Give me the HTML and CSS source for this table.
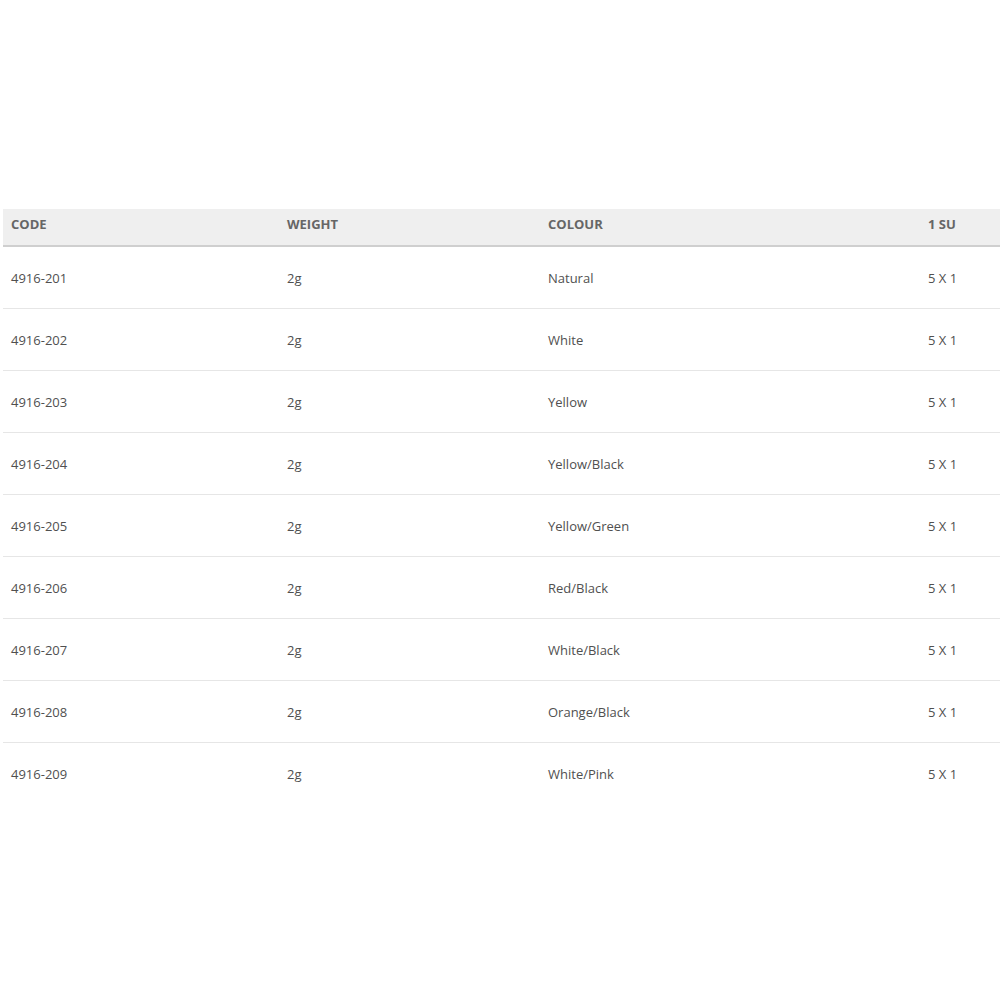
FILE: index.html
```html
<!DOCTYPE html>
<html>
<head>
<meta charset="utf-8">
<link rel="stylesheet" href="styles.css">
</head>
<body>
<div class="wrap">
<table class="spec">
<colgroup><col class="c1"><col class="c2"><col class="c3"><col class="c4"></colgroup>
<thead>
<tr><th>CODE</th><th>WEIGHT</th><th>COLOUR</th><th>1 SU</th></tr>
</thead>
<tbody>
<tr><td>4916-201</td><td>2g</td><td>Natural</td><td>5 X 1</td></tr>
<tr><td>4916-202</td><td>2g</td><td>White</td><td>5 X 1</td></tr>
<tr><td>4916-203</td><td>2g</td><td>Yellow</td><td>5 X 1</td></tr>
<tr><td>4916-204</td><td>2g</td><td>Yellow/Black</td><td>5 X 1</td></tr>
<tr><td>4916-205</td><td>2g</td><td>Yellow/Green</td><td>5 X 1</td></tr>
<tr><td>4916-206</td><td>2g</td><td>Red/Black</td><td>5 X 1</td></tr>
<tr><td>4916-207</td><td>2g</td><td>White/Black</td><td>5 X 1</td></tr>
<tr><td>4916-208</td><td>2g</td><td>Orange/Black</td><td>5 X 1</td></tr>
<tr><td>4916-209</td><td>2g</td><td>White/Pink</td><td>5 X 1</td></tr>
</tbody>
</table>
</div>
</body>
</html>
```
FILE: styles.css
```css
html, body { margin: 0; padding: 0; background: #fff; }
.wrap { padding: 209px 0 0 3px; }
.spec {
  width: 997px;
  border-collapse: collapse;
  table-layout: fixed;
  font-family: "Open Sans", Lato, sans-serif;
  font-size: 13px;
  color: #505050;
}
.c1 { width: 276px; }
.c2 { width: 261px; }
.c3 { width: 380px; }
.c4 { width: 80px; }
.spec th {
  background: #efefef;
  color: #666;
  font-weight: 700;
  text-align: left;
  height: 29px;
  padding: 0 0 7px 8px;
  border-bottom: 2px solid #cfcfcf;
}
.spec td {
  height: 61px;
  padding: 0 0 0 8px;
  border-bottom: 1px solid #e6e6e6;
}
.spec tbody tr:last-child td { border-bottom: none; }
```
